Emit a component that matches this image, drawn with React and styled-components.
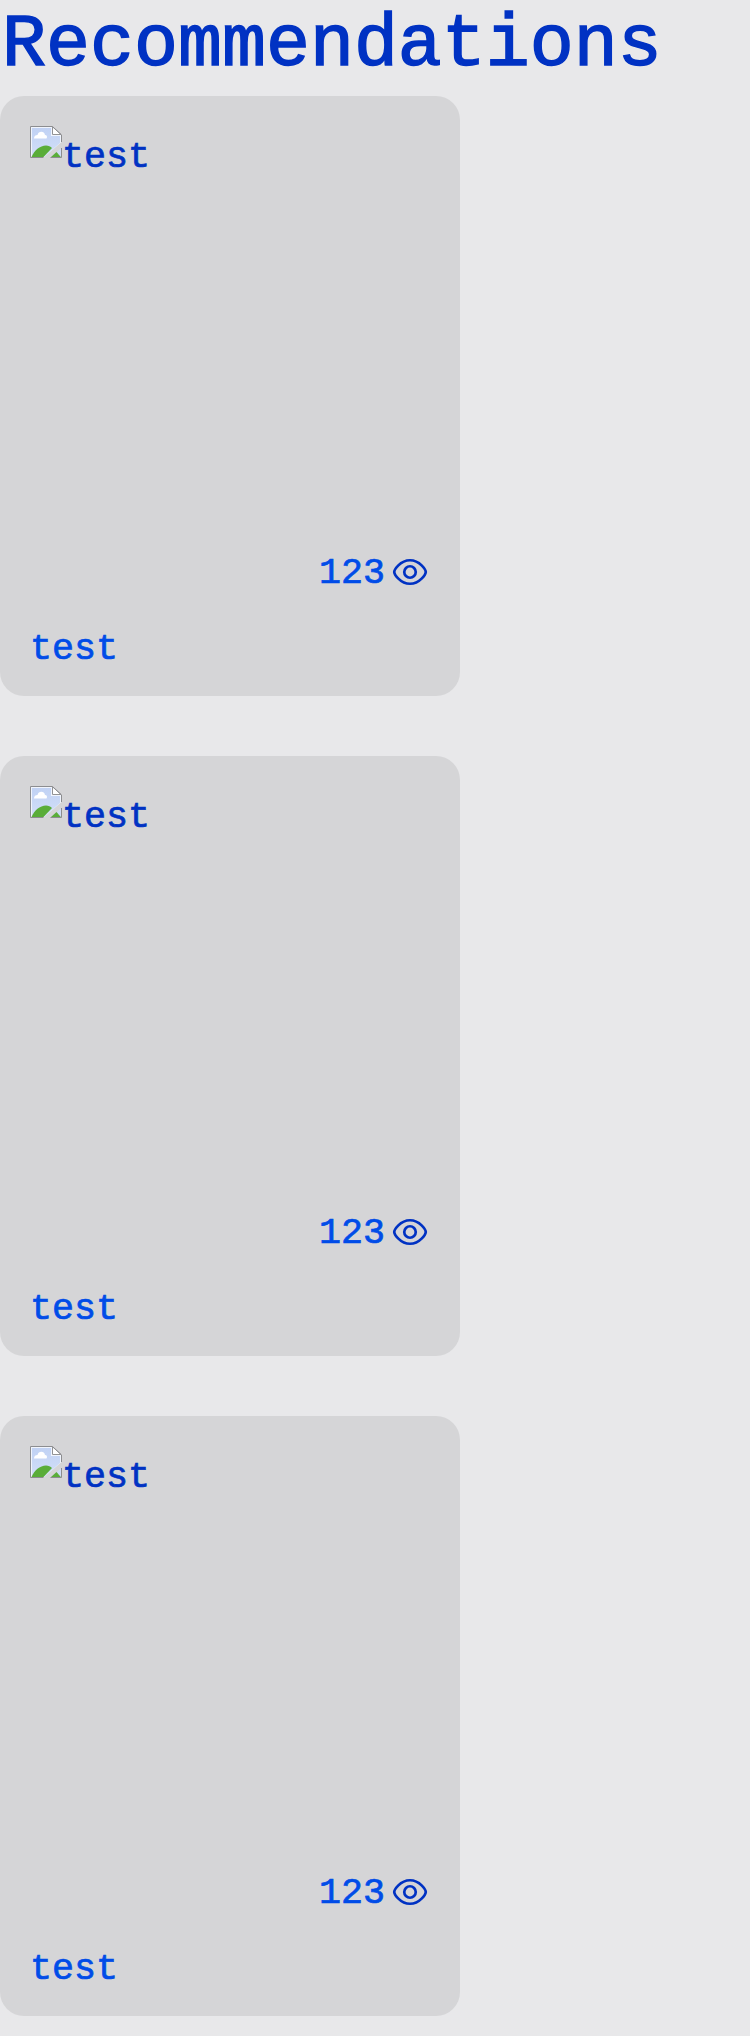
import React from "react";
import styled, { createGlobalStyle } from "styled-components";

const GlobalStyle = createGlobalStyle`
  * { box-sizing: border-box; }
  html, body { margin: 0; background: #e8e8ea; }
  body {
    font-family: "Liberation Mono", "DejaVu Sans Mono", monospace;
    color: #0032c3;
  }
`;

const Page = styled.main`
  width: 750px;
  min-height: 2036px;
`;

const Title = styled.h1`
  margin: 0;
  height: 96px;
  padding: 8px 0 0 2px;
  font-size: 73.3px;
  line-height: 76px;
  font-weight: 400;
  white-space: nowrap;
  -webkit-text-stroke: 1.5px currentColor;
`;

const CardList = styled.section`
  display: flex;
  flex-direction: column;
  gap: 60px;
`;

const Card = styled.article`
  display: flex;
  flex-direction: column;
  width: 460px;
  height: 600px;
  padding: 30px 30px 22px;
  border-radius: 24px;
  background: #d5d5d7;
  font-size: 36.65px;
  line-height: 48px;
  -webkit-text-stroke: 0.7px currentColor;
`;

const Cover = styled.div`
  display: flex;
  align-items: flex-start;
  flex: none;
  height: 422px;
`;

const AltText = styled.span`
  margin-top: 7px;
`;

const Views = styled.div`
  display: flex;
  align-items: center;
  justify-content: flex-end;
  flex: none;
  gap: 7px;
  height: 48px;
  padding-right: 2px;
`;

const Label = styled.span`
  color: #004ce8;
`;

const ViewCount = styled(Label)`
  margin-top: 2px;
`;

const CardTitle = styled(Label)`
  margin-top: 29px;
`;

const MissingImage = () => (
  <svg width="32" height="32" viewBox="0 0 32 32" aria-hidden="true">
    <defs>
      <linearGradient id="sky" x1="0" y1="0" x2="0" y2="1">
        <stop offset="0" stopColor="#c1d2f4" />
        <stop offset="1" stopColor="#d2dff8" />
      </linearGradient>
    </defs>
    <path d="M.5 .5H22.5L31.5 9V16L13.5 31.5H.5Z" fill="#f1f5fd" />
    <path d="M2 2H21V10H30V17L14 31H2Z" fill="url(#sky)" />
    <path d="M4 12.5C4 10 5.5 9 7.5 9C8.5 4.5 14.5 5 15 9C17 9 17.5 11 16.5 12.5Z" fill="#fff" />
    <path d="M1.5 31C4 24.5 10 19.5 16 19.5C18.5 19.5 20.5 20.5 22 22L13.5 31Z" fill="#5aad39" />
    <path d="M22.5 .8V8.5H31.2Z" fill="#fff" stroke="#929294" />
    <path d="M31.5 22V31.5H20.5Z" fill="#cfdcf5" />
    <path d="M26.5 26L30.8 31H21Z" fill="#5aad39" />
    <path d="M13.5 31.5H.5V.5H22.5L31.5 9V16M31.5 22V31.5H20.5" fill="none" stroke="#8c8d90" />
  </svg>
);

const EyeIcon = () => (
  <svg width="36" height="28" viewBox="0 0 36 28" fill="none" stroke="currentColor" strokeWidth="2.7" aria-hidden="true">
    <path d="M2.25 14C2.25 12 8 2.25 18 2.25S33.75 12 33.75 14S28 25.75 18 25.75S2.25 16 2.25 14Z" />
    <circle cx="18" cy="14" r="5.75" />
  </svg>
);

const cards = [1, 2, 3].map((id) => ({ id, title: "test", views: 123 }));

export default function App() {
  return (
    <Page>
      <GlobalStyle />
      <Title>Recommendations</Title>
      <CardList>
        {cards.map((card) => (
          <Card key={card.id}>
            <Cover>
              <MissingImage />
              <AltText>{card.title}</AltText>
            </Cover>
            <Views>
              <ViewCount>{card.views}</ViewCount>
              <EyeIcon />
            </Views>
            <CardTitle>{card.title}</CardTitle>
          </Card>
        ))}
      </CardList>
    </Page>
  );
}
